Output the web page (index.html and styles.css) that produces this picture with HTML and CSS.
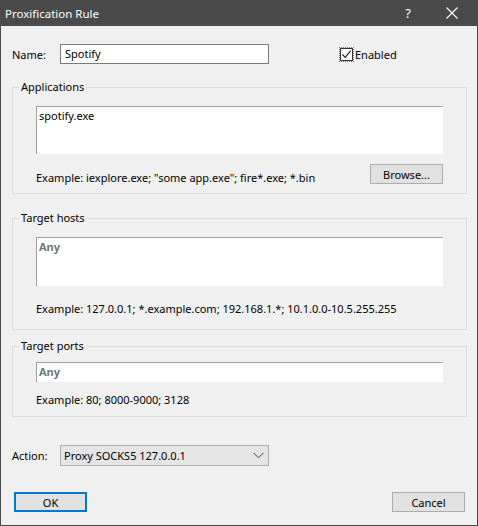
FILE: index.html
```html
<!DOCTYPE html>
<html lang="en">
<head>
    <meta charset="UTF-8">
    <title>Proxification Rule</title>
    <link rel="stylesheet" href="styles.css">
</head>
<body>
<div class="dialog">
    <div class="titlebar">
        <span class="title">Proxification Rule</span>
        <span class="help">?</span>
        <svg class="close" width="12" height="12" viewBox="0 0 12 12">
            <path d="M0.5 0.5 L11.5 11.5 M11.5 0.5 L0.5 11.5" stroke="#fff" stroke-width="1.1" fill="none"/>
        </svg>
    </div>

    <div class="content">
        <div class="name-row">
            <label class="lbl">Name:</label>
            <div class="field name-field">Spotify</div>
            <div class="check">
                <span class="box">
                    <svg width="11" height="11" viewBox="0 0 11 11">
                        <path d="M1.5 5.5 L4.2 8.3 L9.6 1.8" stroke="#222" stroke-width="1.2" fill="none"/>
                    </svg>
                </span>
                <span>Enabled</span>
            </div>
        </div>

        <fieldset class="group apps">
            <legend>Applications</legend>
            <div class="group-body">
                <div class="area apps-area">spotify.exe</div>
                <div class="hint-row">
                    <span class="hint">Example: iexplore.exe; "some app.exe"; fire*.exe; *.bin</span>
                    <button class="btn browse" type="button">Browse...</button>
                </div>
            </div>
        </fieldset>

        <fieldset class="group hosts">
            <legend>Target hosts</legend>
            <div class="group-body">
                <div class="area hosts-area"><span class="any">Any</span></div>
                <p class="hint">Example: 127.0.0.1; *.example.com; 192.168.1.*; 10.1.0.0-10.5.255.255</p>
            </div>
        </fieldset>

        <fieldset class="group ports">
            <legend>Target ports</legend>
            <div class="group-body">
                <div class="area ports-area"><span class="any">Any</span></div>
                <p class="hint">Example: 80; 8000-9000; 3128</p>
            </div>
        </fieldset>

        <div class="action-row">
            <label class="lbl">Action:</label>
            <div class="combo">
                <span>Proxy SOCKS5 127.0.0.1</span>
                <svg width="11" height="7" viewBox="0 0 11 7">
                    <path d="M0.5 0.8 L5.5 5.8 L10.5 0.8" stroke="#444" stroke-width="1" fill="none"/>
                </svg>
            </div>
        </div>

        <div class="buttons">
            <button class="btn ok" type="button">OK</button>
            <button class="btn cancel" type="button">Cancel</button>
        </div>
    </div>
</div>
</body>
</html>
```

FILE: styles.css
```css
body {
    margin: 0;
    font-family: "Noto Sans", "Open Sans", sans-serif;
    font-size: 11px;
    color: #000;
}
.dialog {
    width: 478px;
    height: 526px;
    box-sizing: border-box;
    background-color: #f0f0f0;
    border: 1px solid #4a4a4a;
    border-top: none;
}
.titlebar {
    height: 26px;
    margin: 0 -1px;
    background-color: #4a4a4a;
    color: #fff;
    display: flex;
    align-items: center;
    padding-left: 5px;
}
.title {
    font-size: 11.5px;
    flex: 1;
}
.help {
    font-size: 13px;
    margin-right: 35px;
}
.close {
    margin-right: 20px;
}
.content {
    padding: 0 10px 0 11px;
}
.name-row {
    display: flex;
    align-items: center;
    margin-top: 18px;
    height: 20px;
}
.lbl {
    width: 48px;
}
.field {
    box-sizing: border-box;
    height: 20px;
    background: #fff;
    border: 1px solid #7a7a7a;
    padding: 1px 4px;
    line-height: 16px;
}
.name-field {
    width: 209px;
}
.check {
    display: flex;
    align-items: center;
    margin-left: 71px;
}
.box {
    box-sizing: border-box;
    width: 13px;
    height: 13px;
    border: 1px solid #333;
    outline: 1px dotted #777;
    background: #fff;
    display: flex;
    align-items: center;
    justify-content: center;
    margin-right: 2px;
}
.group {
    margin: 0;
    padding: 0;
    border: 1px solid #dcdcdc;
    min-width: 0;
}
.group legend {
    margin-left: 6px;
    padding: 0 2px;
    line-height: 16px;
}
.group-body {
    padding: 0 23px;
}
.apps {
    margin-top: 15px;
}
.hosts {
    margin-top: 16px;
}
.ports {
    margin-top: 8px;
}
.area {
    box-sizing: border-box;
    background: #fff;
    border-top: 1px solid #a0a0a0;
    border-left: 1px solid #a0a0a0;
    padding: 1px 2px;
    line-height: 16px;
}
.apps-area {
    margin-top: 11px;
    height: 48px;
}
.hosts-area {
    margin-top: 11px;
    height: 49px;
}
.ports-area {
    margin-top: 8px;
    height: 20px;
}
.any {
    font-weight: bold;
    color: #707870;
}
.hint-row {
    display: flex;
    justify-content: space-between;
    align-items: flex-start;
    margin-top: 10px;
    padding-bottom: 7px;
}
.hint-row .hint {
    padding-top: 6px;
}
.hint {
    margin: 0;
    line-height: 16px;
}
.hosts .hint {
    margin-top: 15px;
    padding-bottom: 12px;
}
.ports .hint {
    margin-top: 10px;
    padding-bottom: 8px;
}
.btn {
    box-sizing: border-box;
    height: 20px;
    background: #e1e1e1;
    border: 1px solid #adadad;
    font: inherit;
    color: #000;
    padding: 0;
}
.browse {
    width: 73px;
}
.action-row {
    display: flex;
    align-items: center;
    margin-top: 28px;
    height: 21px;
}
.combo {
    box-sizing: border-box;
    width: 209px;
    height: 21px;
    background: #e5e5e5;
    border: 1px solid #adadad;
    display: flex;
    align-items: center;
    justify-content: space-between;
    padding: 0 4px 0 3px;
}
.buttons {
    display: flex;
    justify-content: space-between;
    margin-top: 26px;
    padding: 0 2px 0 2px;
}
.ok {
    width: 73px;
    border: 2px solid #0078d7;
}
.cancel {
    width: 73px;
}
```
